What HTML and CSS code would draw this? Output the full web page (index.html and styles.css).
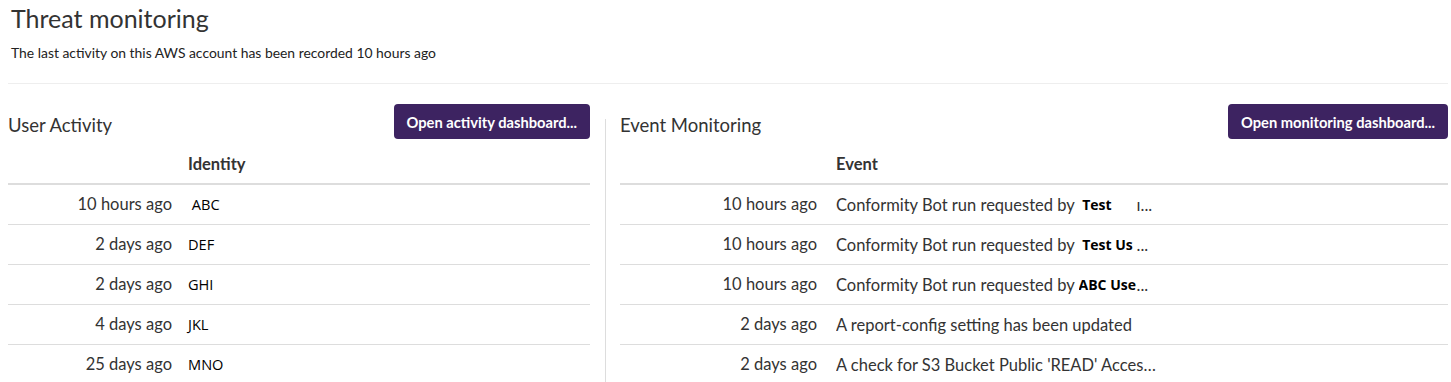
FILE: index.html
```html
<!DOCTYPE html>
<html lang="en">
<head>
  <meta charset="UTF-8">
  <meta name="viewport" content="width=device-width, initial-scale=1.0">
  <title>Threat monitoring</title>
  <link rel="stylesheet" href="styles.css">
</head>
<body>
  <header class="page-header">
    <h1>Threat monitoring</h1>
    <p>The last activity on this AWS account has been recorded 10 hours ago</p>
  </header>

  <main class="panels">
    <section class="panel">
      <div class="panel-head">
        <h2>User Activity</h2>
        <button type="button" class="btn">Open activity dashboard...</button>
      </div>
      <table class="activity">
        <thead>
          <tr><th></th><th>Identity</th></tr>
        </thead>
        <tbody>
          <tr><td class="when">10 hours ago</td><td class="who">&nbsp;ABC</td></tr>
          <tr><td class="when">2 days ago</td><td class="who">DEF</td></tr>
          <tr><td class="when">2 days ago</td><td class="who">GHI</td></tr>
          <tr><td class="when">4 days ago</td><td class="who">JKL</td></tr>
          <tr><td class="when">25 days ago</td><td class="who">MNO</td></tr>
        </tbody>
      </table>
    </section>

    <section class="panel panel-right">
      <div class="panel-head">
        <h2>Event Monitoring</h2>
        <button type="button" class="btn">Open monitoring dashboard...</button>
      </div>
      <table class="events">
        <thead>
          <tr><th></th><th>Event</th></tr>
        </thead>
        <tbody>
          <tr><td class="when">10 hours ago</td><td><span class="event">Conformity Bot run requested by <b class="user">&nbsp;Test</b><span class="dots">ı...</span></span></td></tr>
          <tr><td class="when">10 hours ago</td><td><span class="event">Conformity Bot run requested by <b class="user">&nbsp;Test Us</b><span class="dots">...</span></span></td></tr>
          <tr><td class="when">10 hours ago</td><td><span class="event">Conformity Bot run requested by <b class="user">ABC Use</b><span class="dots">...</span></span></td></tr>
          <tr><td class="when">2 days ago</td><td><span class="event">A report-config setting has been updated</span></td></tr>
          <tr><td class="when">2 days ago</td><td><span class="event">A check for S3 Bucket Public 'READ' Access is failing</span></td></tr>
        </tbody>
      </table>
    </section>
  </main>
</body>
</html>
```

FILE: styles.css
```css
:root {
  --brand: #3d2361;
  --text: #333;
  --line: #ddd;
}

* {
  box-sizing: border-box;
  font-family: 'Lato', 'Open Sans', sans-serif;
}

body {
  margin: 0;
  padding: 0 3px 0 8px;
  background-color: white;
  color: var(--text);
  overflow: hidden;
}

.page-header {
  padding: 0 0 0 3px;
  border-bottom: 1px solid #eee;
}

.page-header h1 {
  margin: 0;
  padding-top: 3px;
  font-size: 25px;
  font-weight: 400;
  line-height: 30px;
}

.page-header p {
  margin: 11px 0 0;
  font-size: 13.9px;
  line-height: 18px;
  padding-bottom: 21px;
  color: #222;
}

.panels {
  display: grid;
  grid-template-columns: 582px 1fr;
  margin-top: 20px;
}

.panel-right {
  margin-left: 15px;
  padding-left: 15px;
  background: linear-gradient(var(--line), var(--line)) no-repeat 0 15px / 1px 100%;
}

.panel-head {
  display: flex;
  justify-content: space-between;
  align-items: center;
}

.panel-head h2 {
  margin: 6px 0 0;
  font-size: 18.5px;
  font-weight: 400;
}

.btn {
  height: 35px;
  padding: 0 13px;
  background-color: var(--brand);
  color: white;
  border: none;
  border-radius: 4px;
  font-size: 14.7px;
  font-weight: 700;
  cursor: pointer;
}

table {
  width: 100%;
  border-collapse: collapse;
  margin-top: 6px;
}

th {
  height: 39px;
  text-align: left;
  font-size: 16.5px;
  font-weight: 700;
  border-bottom: 2px solid var(--line);
  padding: 0 8px;
}

td {
  height: 40px;
  padding: 0 8px;
  font-size: 16.5px;
  border-top: 1px solid var(--line);
  white-space: nowrap;
}

tbody tr:first-child td {
  border-top: none;
}

.when {
  text-align: right;
}

.activity th:first-child,
.activity td:first-child {
  width: 172px;
}

.events th:first-child,
.events td:first-child {
  width: 205px;
}

.events th:last-child,
.events td:last-child {
  padding-left: 11px;
}

.who {
  font-family: 'Open Sans', sans-serif;
  font-size: 14.6px;
  color: #000;
}

.event {
  display: inline-block;
  max-width: 320px;
  overflow: hidden;
  text-overflow: ellipsis;
  vertical-align: middle;
}

.user {
  display: inline-block;
  width: 58px;
  overflow: hidden;
  vertical-align: top;
  font-family: 'Open Sans', sans-serif;
  font-size: 14px;
  color: #000;
}

.dots {
  color: #333;
}
```
